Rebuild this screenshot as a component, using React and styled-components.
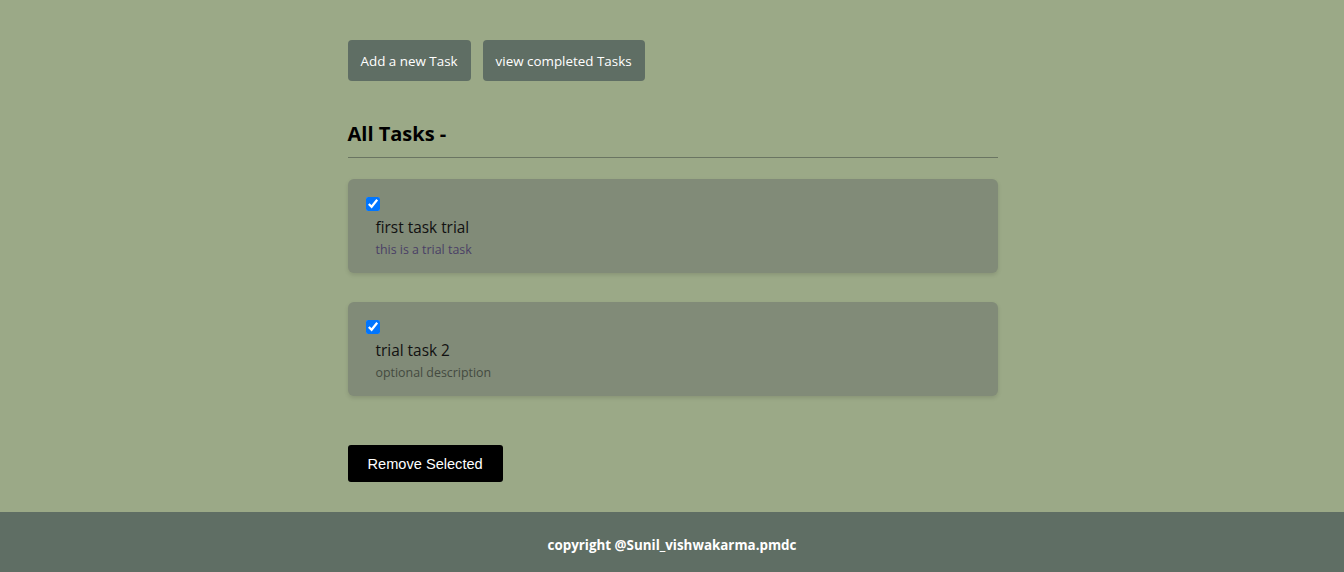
import React, { useState } from "react";
import styled, { createGlobalStyle } from "styled-components";

const GlobalStyle = createGlobalStyle`
  html, body {
    margin: 0;
    padding: 0;
    background: #9ba987;
    font-family: "Open Sans", "Noto Sans", sans-serif;
  }
`;

const Page = styled.div`
  min-height: 572px;
  display: flex;
  flex-direction: column;
`;

const Main = styled.main`
  flex: 1;
  width: 651px;
  margin: 0 auto;
  padding: 40px 0 30px 1px;
  box-sizing: border-box;
`;

const Toolbar = styled.div`
  display: flex;
  gap: 12px;
`;

const NavButton = styled.button`
  height: 41px;
  padding: 0 13px;
  border: none;
  border-radius: 4px;
  background: #5f6e64;
  color: #fff;
  font-family: "Open Sans", "Noto Sans", sans-serif;
  font-size: 13.4px;
  cursor: pointer;
`;

const Heading = styled.h2`
  margin: 39px 0 0;
  padding-bottom: 10px;
  font-size: 20px;
  font-weight: 700;
  color: #000;
  border-bottom: 1px solid #6a7562;
`;

const TaskList = styled.div`
  display: flex;
  flex-direction: column;
  gap: 29px;
  margin-top: 21px;
`;

const Card = styled.div`
  height: 94px;
  box-sizing: border-box;
  padding: 18px 18px 0;
  border-radius: 6px;
  background: #818b78;
  box-shadow: 0 2px 4px rgba(0, 0, 0, 0.12);
`;

const Check = styled.input`
  display: block;
  width: 14px;
  height: 14px;
  margin: 0;
`;

const Title = styled.div`
  margin: 6px 0 0 10px;
  font-size: 15.4px;
  line-height: 22px;
  color: #111;
`;

const Desc = styled.div`
  margin: 2px 0 0 10px;
  font-size: 12.4px;
  line-height: 18px;
  color: ${(p) => p.$tone};
`;

const RemoveButton = styled.button`
  margin-top: 49px;
  height: 37px;
  padding: 0 20px;
  border: none;
  border-radius: 3px;
  background: #000;
  color: #fff;
  font-family: "Liberation Sans", Arial, sans-serif;
  font-size: 14.6px;
  cursor: pointer;
`;

const Footer = styled.footer`
  height: 60px;
  box-sizing: border-box;
  padding-top: 6px;
  background: #5f6e64;
  color: #fff;
  display: flex;
  align-items: center;
  justify-content: center;
  font-size: 13.4px;
  font-weight: 700;
`;

const tasks = [
  { id: 1, title: "first task trial", desc: "this is a trial task", tone: "#4a3f66" },
  { id: 2, title: "trial task 2", desc: "optional description", tone: "#444a40" },
];

export default function App() {
  const [checked, setChecked] = useState({ 1: true, 2: true });

  return (
    <Page>
      <GlobalStyle />
      <Main>
        <Toolbar>
          <NavButton>Add a new Task</NavButton>
          <NavButton>view completed Tasks</NavButton>
        </Toolbar>
        <Heading>All Tasks -</Heading>
        <TaskList>
          {tasks.map((t) => (
            <Card key={t.id}>
              <Check
                type="checkbox"
                checked={!!checked[t.id]}
                onChange={() => setChecked({ ...checked, [t.id]: !checked[t.id] })}
              />
              <Title>{t.title}</Title>
              <Desc $tone={t.tone}>{t.desc}</Desc>
            </Card>
          ))}
        </TaskList>
        <RemoveButton>Remove Selected</RemoveButton>
      </Main>
      <Footer>copyright @Sunil_vishwakarma.pmdc</Footer>
    </Page>
  );
}
